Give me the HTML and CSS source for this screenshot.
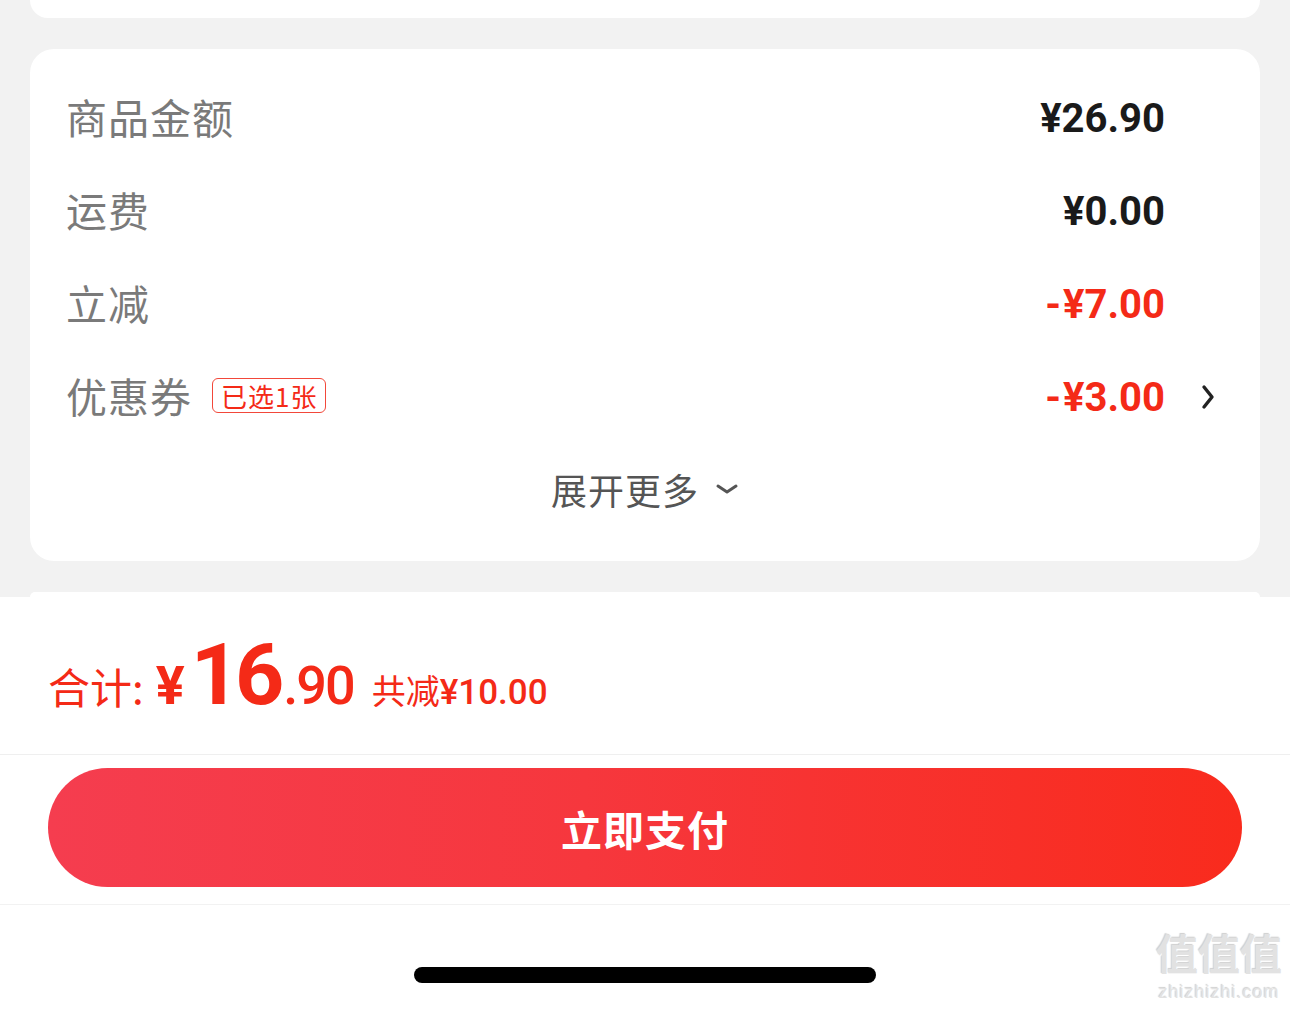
FILE: index.html
```html
<!DOCTYPE html>
<html lang="zh-CN">
<head>
    <meta charset="UTF-8">
    <meta name="viewport" content="width=device-width, initial-scale=1.0">
    <title>确认订单</title>
    <link rel="stylesheet" href="styles.css">
</head>
<body>
    <div class="page">
        <div class="card card-top"></div>

        <div class="card summary">
            <div class="row">
                <span class="label">商品金额</span>
                <span class="value">¥26.90</span>
                <span class="tail"></span>
            </div>
            <div class="row">
                <span class="label">运费</span>
                <span class="value">¥0.00</span>
                <span class="tail"></span>
            </div>
            <div class="row">
                <span class="label">立减</span>
                <span class="value red"><i>-</i>¥7.00</span>
                <span class="tail"></span>
            </div>
            <div class="row">
                <span class="label">优惠券</span>
                <span class="badge">已选1张</span>
                <span class="value red"><i>-</i>¥3.00</span>
                <span class="tail">
                    <svg width="14" height="26" viewBox="0 0 14 26">
                        <polyline points="3,3 11,13 3,23" fill="none" stroke="#222" stroke-width="3.4" stroke-linecap="round" stroke-linejoin="round"/>
                    </svg>
                </span>
            </div>
            <div class="more">
                <span>展开更多</span>
                <svg width="24" height="12" viewBox="0 0 24 12">
                    <polyline points="3,3 12,9 21,3" fill="none" stroke="#555" stroke-width="3" stroke-linecap="round" stroke-linejoin="round"/>
                </svg>
            </div>
        </div>

        <div class="card card-peek"></div>

        <div class="footer">
            <div class="total">
                <span class="total-label">合计:</span>
                <span class="yen">¥</span>
                <span class="int">16</span>
                <span class="dec">.90</span>
                <span class="saved">共减<b>¥10.00</b></span>
            </div>
            <div class="pay-bar">
                <button class="pay">立即支付</button>
            </div>
            <div class="home">
                <div class="indicator"></div>
            </div>
            <div class="watermark">
                <div class="wm-logo">值值值</div>
                <div class="wm-url">zhizhizhi.com</div>
            </div>
        </div>
    </div>
</body>
</html>
```

FILE: styles.css
```css
body {
    margin: 0;
    background-color: #f2f2f2;
    font-family: "Noto Sans CJK SC", "Noto Sans", sans-serif;
    color: #1a1a1a;
}
.page {
    width: 1290px;
    height: 1010px;
    overflow: hidden;
    display: flex;
    flex-direction: column;
}
.card {
    background: white;
    margin: 0 30px;
    border-radius: 24px;
}
.card-top {
    height: 18px;
    border-radius: 0 0 24px 24px;
    flex: none;
}
.summary {
    margin-top: 31px;
    height: 512px;
    box-sizing: border-box;
    padding: 22px 0 0 37px;
    flex: none;
}
.row {
    height: 93px;
    display: flex;
    align-items: center;
}
.label {
    font-size: 41px;
    color: #7a7a7a;
    letter-spacing: 1px;
    margin: -4px 0 0 -1px;
}
.badge {
    margin: -2px 0 0 20px;
    border: 1.5px solid #f2483a;
    border-radius: 6px;
    color: #f42a17;
    font-size: 26px;
    line-height: 33px;
    padding: 0 8px;
    letter-spacing: 1px;
}
.value {
    margin-left: auto;
    font-family: Roboto, "Liberation Sans", sans-serif;
    font-weight: 700;
    font-size: 40px;
    color: #1a1a1a;
    margin-top: 2px;
}
.value i {
    font-style: normal;
    margin-right: 2px;
}
.value.red {
    color: #f42a17;
}
.tail {
    width: 95px;
    display: flex;
    align-items: center;
    padding-left: 36px;
    box-sizing: border-box;
}
.more {
    height: 92px;
    display: flex;
    align-items: center;
    justify-content: center;
    gap: 16px;
    font-size: 36px;
    color: #555;
    letter-spacing: 1px;
    padding-right: 37px;
}
.card-peek {
    margin-top: 31px;
    height: 5px;
    border-radius: 24px 24px 0 0;
    flex: none;
}
.footer {
    background: white;
    flex: 1;
    display: flex;
    flex-direction: column;
    position: relative;
}
.total {
    height: 158px;
    border-bottom: 1px solid #efefef;
    display: flex;
    align-items: baseline;
    padding: 28px 0 0 48px;
    box-sizing: border-box;
    color: #f42a17;
}
.total-label {
    font-size: 42px;
    margin-right: 12px;
}
.yen {
    font-family: Roboto, "Liberation Sans", sans-serif;
    font-weight: 700;
    font-size: 54px;
    margin-right: 6px;
}
.int {
    font-family: Roboto, "Liberation Sans", sans-serif;
    font-weight: 700;
    font-size: 86px;
    letter-spacing: -5px;
    line-height: 100px;
}
.dec {
    font-family: Roboto, "Liberation Sans", sans-serif;
    font-weight: 500;
    font-size: 54px;
    letter-spacing: -2px;
    margin-left: 4px;
}
.saved {
    font-size: 34px;
    margin-left: 18px;
}
.saved b {
    font-family: Roboto, "Liberation Sans", sans-serif;
    font-weight: 500;
    font-size: 35px;
}
.pay-bar {
    height: 150px;
    border-bottom: 1px solid #f2f2f2;
    padding: 13px 48px 0 48px;
    box-sizing: border-box;
}
.pay {
    width: 100%;
    height: 119px;
    border: none;
    border-radius: 60px;
    background: linear-gradient(90deg, #f53d4f 0%, #f6373d 45%, #f92b1d 100%);
    color: white;
    font-family: "Noto Sans CJK SC", sans-serif;
    font-weight: 700;
    font-size: 41px;
    letter-spacing: 1px;
}
.home {
    flex: 1;
    display: flex;
    justify-content: center;
    padding-top: 62px;
}
.indicator {
    width: 462px;
    height: 16px;
    background: #000;
    border-radius: 8px;
}
.watermark {
    position: absolute;
    right: 8px;
    bottom: 8px;
    text-align: center;
    color: #e2e2e2;
    text-shadow: 1px 1px 1px #fff, -1px -1px 1px #cfcfcf;
}
.wm-logo {
    font-size: 42px;
    line-height: 52px;
    font-weight: 700;
}
.wm-url {
    font-family: "Liberation Sans", sans-serif;
    font-size: 18px;
    line-height: 20px;
    margin-top: 4px;
    letter-spacing: 1px;
}
```
